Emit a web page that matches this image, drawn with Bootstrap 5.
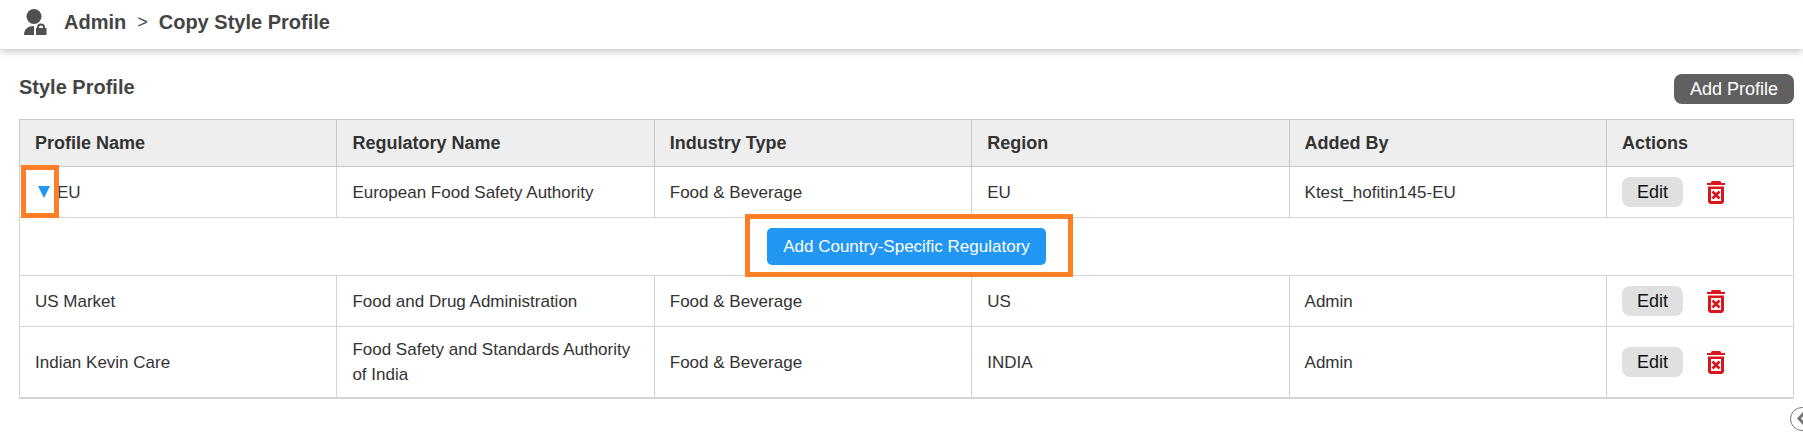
<!DOCTYPE html>
<html lang="en">
<head>
<meta charset="utf-8">
<meta name="viewport" content="width=device-width, initial-scale=1">
<title>Copy Style Profile</title>
<link rel="stylesheet" href="https://cdn.jsdelivr.net/npm/bootstrap@5.3.0/dist/css/bootstrap.min.css">
<style>
body{font-family:"Liberation Sans",Arial,sans-serif;font-size:18px;line-height:25px;color:#333;background:#fff;overflow-x:hidden}
.topbar{height:49px;padding:0 24px 5px;box-shadow:0 2px 8px rgba(0,0,0,.25)}
.crumbs{gap:11px;font-size:20px;font-weight:700;color:#444}
.crumbs a{color:inherit;text-decoration:none}
.crumb-sep{font-size:18px;font-weight:400}
.content-area{padding:25px 9px 24px 19px}
.page-title{font-size:20px;line-height:26px;font-weight:700;color:#444;margin:0}
.btn-solid{border:0;background:#606060;color:#fff;font-size:18px;line-height:24px;padding:3px 16px;border-radius:8px}
.btn-edit{border:0;background:#e0e0e0;color:#111;font-size:18px;line-height:24px;padding:3px 15px;border-radius:8px}
.btn-add{background:#2196f3;color:#fff;border:0;font-size:17px;line-height:25px;padding:6px 16px;border-radius:5px}
.btn-trash{border:0;background:none;padding:0;line-height:0}
.profiles{table-layout:fixed;border-collapse:collapse;width:100%;margin-top:15px;border:1px solid #d3d3d3;border-bottom-width:2px}
.profiles th,.profiles td{border:1px solid #d3d3d3;padding:10px 15px;vertical-align:middle}
.profiles th{background:#eee;border-color:#c8c8c8;color:#333;font-weight:700;height:47px}
.profiles td{font-size:17px;height:51px}
.profiles .tight{padding-right:8px}
.profiles td.sub{height:58px}
.profiles tr:last-child td{border-bottom-width:2px}
.profiles .acts{padding-top:0;padding-bottom:0}
.col-actions{width:187px}
.toggle{border:0;background:none;padding:0 3px;line-height:0}
.mark-box{position:absolute;border:5px solid #ff7f27;pointer-events:none}
.mark-toggle{inset:-21px -6px -20px -14px}
.mark-add{inset:-14px -27px -12px -22px}
.side-tab{position:fixed;right:-11px;bottom:1px;width:24px;height:24px;padding:0;border:0;background:none;line-height:0}
</style>
<script src="https://cdn.jsdelivr.net/npm/bootstrap@5.3.0/dist/js/bootstrap.bundle.min.js"></script>
</head>
<body>
<svg class="d-none" aria-hidden="true">
<symbol id="trash" viewBox="0 0 18 23"><path fill="#d9161c" fill-rule="evenodd" d="M0 2h4V1l1-1h8l1 1v1h4v2H0zM1 5.500h16v15.500l-2 2H3l-2-2zM4 8v12h10V8z"/><path d="M5.500 10.500l7 7M12.500 10.500l-7 7" stroke="#d9161c" stroke-width="2.600"/></symbol>
</svg>
<header class="topbar d-flex align-items-center">
<svg width="24" height="27" viewBox="0 0 24 27" fill="#505050" class="me-3" aria-hidden="true"><circle cx="10" cy="7.500" r="7.500"/><path d="M0 26c0-6 4-9 10-9v9z"/><path fill-rule="evenodd" d="M12 19h1v-.5a4 4 0 0 1 8 0v.5h1.500v7H12zM15 19h4v-.5a2 2 0 0 0-4 0z"/></svg>
<nav class="crumbs d-flex align-items-center" aria-label="Breadcrumb"><a href="#">Admin</a><span class="crumb-sep">&gt;</span><span>Copy Style Profile</span></nav>
</header>
<main class="content-area">
<div class="d-flex justify-content-between align-items-start">
<h1 class="page-title">Style Profile</h1>
<button type="button" class="btn btn-solid">Add Profile</button>
</div>
<table class="profiles">
<colgroup><col><col><col><col><col><col class="col-actions"></colgroup>
<thead><tr><th scope="col">Profile Name</th><th scope="col">Regulatory Name</th><th scope="col">Industry Type</th><th scope="col">Region</th><th scope="col">Added By</th><th scope="col">Actions</th></tr></thead>
<tbody>
<tr><td><div class="d-flex align-items-center"><span class="position-relative d-flex me-1"><button type="button" class="toggle" aria-label="Collapse EU" aria-expanded="true"><svg width="12" height="12" viewBox="0 0 12 12"><path d="M0 0h12L6 12z" fill="#2196f3"/></svg></button><span class="mark-box mark-toggle"></span></span><span>EU</span></div></td><td>European Food Safety Authority</td><td>Food &amp; Beverage</td><td>EU</td><td>Ktest_hofitin145-EU</td><td class="acts"><div class="d-flex align-items-center gap-4"><button type="button" class="btn btn-edit">Edit</button><button type="button" class="btn-trash" aria-label="Delete EU"><svg width="18" height="23"><use href="#trash"/></svg></button></div></td></tr>
<tr><td colspan="6" class="sub text-center"><span class="position-relative d-inline-flex"><button type="button" class="btn btn-add">Add Country-Specific Regulatory</button><span class="mark-box mark-add"></span></span></td></tr>
<tr><td>US Market</td><td>Food and Drug Administration</td><td>Food &amp; Beverage</td><td>US</td><td>Admin</td><td class="acts"><div class="d-flex align-items-center gap-4"><button type="button" class="btn btn-edit">Edit</button><button type="button" class="btn-trash" aria-label="Delete US Market"><svg width="18" height="23"><use href="#trash"/></svg></button></div></td></tr>
<tr><td>Indian Kevin Care</td><td class="tight">Food Safety and Standards Authority of India</td><td>Food &amp; Beverage</td><td>INDIA</td><td>Admin</td><td class="acts"><div class="d-flex align-items-center gap-4"><button type="button" class="btn btn-edit">Edit</button><button type="button" class="btn-trash" aria-label="Delete Indian Kevin Care"><svg width="18" height="23"><use href="#trash"/></svg></button></div></td></tr>
</tbody>
</table>
</main>
<button type="button" class="side-tab" aria-label="Open side panel"><svg width="24" height="24" viewBox="0 0 24 24" fill="none"><circle cx="12" cy="12" r="11.500" fill="#fff" stroke="#777"/><path d="M14 6l-5 5.500 5 5.500" stroke="#777" stroke-width="3"/></svg></button>
</body>
</html>
